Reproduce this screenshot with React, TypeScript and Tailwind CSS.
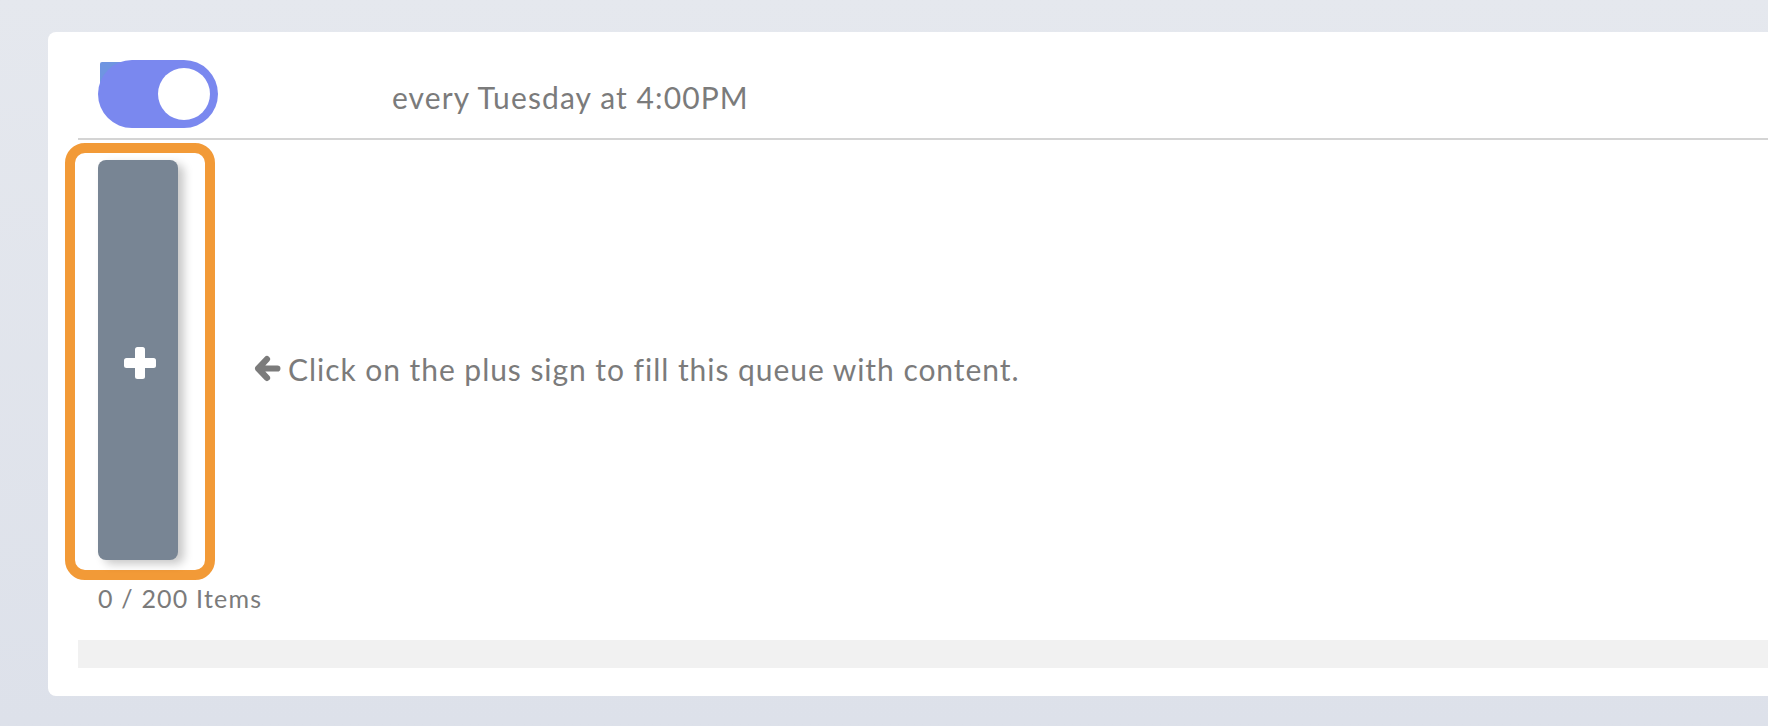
import React from "react";

export default function App() {
  const font = { fontFamily: "Lato, 'Open Sans', sans-serif" };
  return (
    <div
      className="w-[1768px] h-[726px] overflow-hidden bg-gradient-to-b from-[#e5e8ee] to-[#dde1ea] pt-[32px] pl-[48px]"
      style={font}
    >
      <div className="w-[1760px] h-[664px] bg-white rounded-[8px] flex flex-col">
        {/* header */}
        <div className="flex items-center pl-[50px] pt-[28px]">
          <div className="relative w-[120px] h-[68px]">
            <div className="absolute left-[2px] top-[2px] w-[26px] h-[26px] rounded-[2px] bg-[#6f95e1]" />
            <div className="absolute inset-0 rounded-full bg-[#7a88ef] flex items-center justify-end pr-[8px]">
              <div className="w-[52px] h-[52px] rounded-full bg-white" />
            </div>
          </div>
          <div className="ml-[174px] mt-[6px] text-[30px] tracking-[1.1px] text-[#7b7b7b] leading-none">
            every Tuesday at 4:00PM
          </div>
        </div>
        <div className="mt-[10px] ml-[30px] h-[2px] bg-[#d4d4d4]" />
        {/* body */}
        <div className="flex items-center mt-[3px] ml-[17px]">
          <div className="w-[150px] h-[437px] border-[10px] border-[#f29a37] rounded-[20px] pl-[23px] pt-[7px] pb-[10px]">
            <div className="w-[80px] h-full rounded-[8px] bg-[#788594] shadow-[6px_4px_10px_rgba(0,0,0,0.22)] flex items-center justify-center">
              <svg width="32" height="32" viewBox="0 0 32 32" className="ml-[4px] mt-[6px]">
                <rect x="11" y="0" width="10" height="32" rx="2.5" fill="white" />
                <rect x="0" y="11" width="32" height="10" rx="2.5" fill="white" />
              </svg>
            </div>
          </div>
          <div className="flex items-center ml-[39px] mt-[14px] text-[#7b7b7b]">
            <svg width="27" height="27" viewBox="0 0 26 26" className="mr-[7px]">
              <path
                d="M12.5 4 L4 13 L12.5 22 M4 13 L22.5 13"
                stroke="#7b7b7b"
                strokeWidth="6"
                strokeLinecap="round"
                strokeLinejoin="round"
                fill="none"
              />
            </svg>
            <span className="text-[30px] tracking-[0.95px] leading-none">
              Click on the plus sign to fill this queue with content.
            </span>
          </div>
        </div>
        <div className="ml-[50px] mt-[6px] text-[25px] tracking-[1.2px] leading-none text-[#7b7b7b]">
          0 / 200 Items
        </div>
        <div className="ml-[30px] mt-[29px] h-[28px] bg-[#f1f1f1]" />
      </div>
    </div>
  );
}
